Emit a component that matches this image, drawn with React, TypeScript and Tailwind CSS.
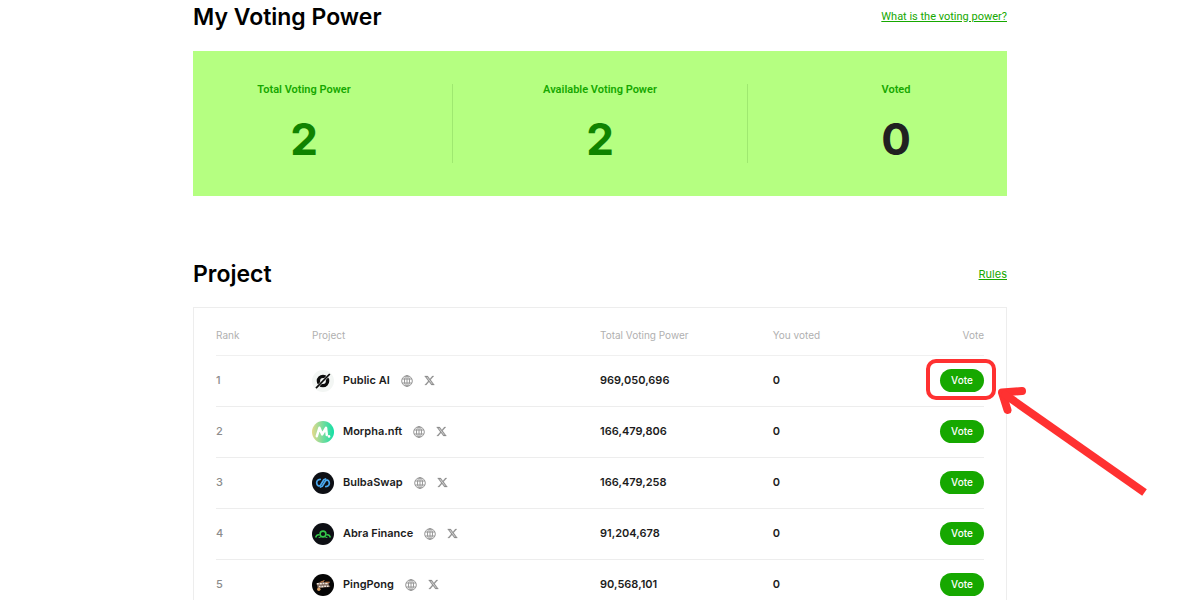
import type { ReactNode } from "react";

type Project = {
  name: string;
  power: string;
  voted: number;
  logo: ReactNode;
  highlighted?: boolean;
};

const PublicAiLogo = () => (
  <svg viewBox="0 0 22 22" className="size-[22px]" aria-hidden="true">
    <circle cx="11" cy="11" r="11" fill="#f3f6f4" />
    <circle cx="11" cy="11" r="4.6" fill="none" stroke="#0c0c0c" strokeWidth="3.4" />
    <path d="M6.5 15.7 15.5 6.3" stroke="#f3f6f4" strokeWidth="2.4" />
    <path d="M4 18.2 17.8 4" stroke="#0c0c0c" strokeWidth="1.7" />
  </svg>
);

const MorphaLogo = () => (
  <svg viewBox="0 0 22 22" className="size-[22px]" aria-hidden="true">
    <defs>
      <linearGradient id="morpha" x1="0" y1="0" x2="1" y2="0">
        <stop offset="0" stopColor="#e6d98a" />
        <stop offset="0.45" stopColor="#7fdc9c" />
        <stop offset="1" stopColor="#12dfa6" />
      </linearGradient>
    </defs>
    <circle cx="11" cy="11" r="11" fill="url(#morpha)" />
    <path
      d="M4.8 15.2 7.4 6.8l2.8 6.6L14 6.8l.8 7.2"
      fill="none"
      stroke="#fff"
      strokeWidth="2.5"
      strokeLinecap="round"
      strokeLinejoin="round"
    />
    <circle cx="17" cy="15.4" r="1.3" fill="#fff" />
  </svg>
);

const BulbaLogo = () => (
  <svg viewBox="0 0 22 22" className="size-[22px]" aria-hidden="true">
    <circle cx="11" cy="11" r="11" fill="#0d0f14" />
    <g fill="none" stroke="#4aa8ee" strokeWidth="1.7" strokeLinecap="round" strokeLinejoin="round">
      <path d="M8.2 7.4C5.6 7.6 4.2 9.6 4.8 11.8 5.4 14 7.4 14.6 8.6 13L11.8 7.8 13.6 7" />
      <path d="M13.8 14.6C16.4 14.4 17.8 12.4 17.2 10.2 16.6 8 14.6 7.4 13.4 9L10.2 14.2 8.4 15" />
    </g>
  </svg>
);

const AbraLogo = () => (
  <svg viewBox="0 0 22 22" className="size-[22px]" aria-hidden="true">
    <circle cx="11" cy="11" r="11" fill="#0d0f14" />
    <g fill="none" stroke="#35c84a">
      <circle cx="11" cy="11" r="2.9" strokeWidth="1.6" />
      <path d="M3.6 14.6c.6-2 2.2-3.2 4-2.8M18.4 14.6c-.6-2-2.2-3.2-4-2.8" strokeWidth="1.6" />
      <path d="M6.6 14.4h2M13.4 14.4h2" strokeWidth="1" />
    </g>
  </svg>
);

const PingPongLogo = () => (
  <svg viewBox="0 0 22 22" className="size-[22px]" aria-hidden="true">
    <circle cx="11" cy="11" r="11" fill="#050505" />
    <path d="M4.6 9.6 12.4 6.2l-.8 2 6.6-.4-1.6 2.4 1.8 2.8-6.4.4-6.2 1.2z" fill="#7b6457" />
    <path
      d="M4.8 9.8h2M7.6 9.8h2.2M10.6 9.4h1.8M13.2 9.4h2.4M6.8 12.4h1.8M9.4 12.4h2M12.2 12.2h1.8M14.8 12.2h1.8"
      stroke="#efe6dd"
      strokeWidth="1.5"
    />
    <path d="M8.4 8.2l4-1.6M13.4 8.2h4" stroke="#c9773a" strokeWidth="0.9" />
    <circle cx="6.8" cy="15.2" r="1.7" fill="#d9a066" />
  </svg>
);

const GlobeIcon = () => (
  <svg viewBox="0 0 12 12" className="size-3" fill="none" stroke="#8c8c8c" strokeWidth="0.9" aria-hidden="true">
    <circle cx="6" cy="6" r="5.3" />
    <ellipse cx="6" cy="6" rx="2.5" ry="5.3" />
    <path d="M6 .8v10.4M1.2 4h9.6M1.2 8h9.6" />
  </svg>
);

const XIcon = () => (
  <svg viewBox="0 0 24 24" className="size-[11px]" fill="#8c8c8c" stroke="#8c8c8c" strokeWidth="0.6" aria-hidden="true">
    <path d="M18.244 2.25h3.308l-7.227 8.26 8.502 11.24H16.17l-5.214-6.817L4.99 21.75H1.68l7.73-8.835L1.254 2.25H8.08l4.713 6.231zm-1.161 17.52h1.833L7.084 4.126H5.117z" />
  </svg>
);

const projects: Project[] = [
  { name: "Public AI", power: "969,050,696", voted: 0, logo: <PublicAiLogo />, highlighted: true },
  { name: "Morpha.nft", power: "166,479,806", voted: 0, logo: <MorphaLogo /> },
  { name: "BulbaSwap", power: "166,479,258", voted: 0, logo: <BulbaLogo /> },
  { name: "Abra Finance", power: "91,204,678", voted: 0, logo: <AbraLogo /> },
  { name: "PingPong", power: "90,568,101", voted: 0, logo: <PingPongLogo /> },
];

// Red frame and arrow drawn over the first vote button
const VoteCallout = () => (
  <>
    <span className="pointer-events-none absolute -top-[10px] -right-[12px] -bottom-[8px] -left-[14px] rounded-[10px] border-4 border-[#ff3131]" />
    <svg
      viewBox="0 0 150 112"
      className="pointer-events-none absolute top-4 left-[58px] h-[112px] w-[150px] max-w-none"
      fill="none"
      stroke="#ff3131"
      strokeWidth="8"
      aria-hidden="true"
    >
      <path d="M24 6 4 7.5 9.5 25" strokeLinecap="round" strokeLinejoin="round" />
      <path d="M4 7.5 146.5 107.5" />
    </svg>
  </>
);

function PowerStat({ label, value, className }: { label: string; value: number; className: string }) {
  return (
    <div className={`flex h-[79px] flex-col items-center ${className}`}>
      <dt className="font-['Roboto',sans-serif] text-[11px] leading-3 font-semibold text-[#16a800]">{label}</dt>
      <dd
        className={`mt-[19px] text-[44px] leading-[48px] font-bold ${value > 0 ? "text-[#108300]" : "text-[#212121]"}`}
      >
        {value}
      </dd>
    </div>
  );
}

export default function App() {
  return (
    <main className="min-h-screen overflow-hidden bg-white font-['Inter',sans-serif]">
      <div className="mx-auto max-w-[814px]">
        {/* Voting power */}
        <section>
          <div className="flex h-[51px] items-start justify-between pt-[5px]">
            <h2 className="text-[23px] leading-6 font-semibold text-black">My Voting Power</h2>
            <a
              href="#power"
              className="font-['Roboto',sans-serif] text-[11px] leading-6 text-[#16a800] underline"
            >
              What is the voting power?
            </a>
          </div>
          <dl className="flex bg-[#b5ff81] py-[33px]">
            <PowerStat label="Total Voting Power" value={2} className="flex-1 pr-[37px]" />
            <PowerStat
              label="Available Voting Power"
              value={2}
              className="w-[296px] border-x border-[#9fe870]"
            />
            <PowerStat label="Voted" value={0} className="flex-1 pl-[37px]" />
          </dl>
        </section>

        {/* Project ranking */}
        <section className="mt-[66px]">
          <div className="flex items-center justify-between">
            <h2 className="text-[23px] leading-6 font-semibold text-black">Project</h2>
            <a href="#rules" className="text-[11px] leading-6 text-[#16a800] underline">
              Rules
            </a>
          </div>
          <div className="mt-[21px] border border-[#ededed] px-[22px] pt-2">
            <table className="w-full table-fixed text-left">
              <thead>
                <tr className="h-[39px] border-b border-[#f0f0f0] text-[10px] text-[#b0b0b0]">
                  <th className="w-[12.5%] font-normal">Rank</th>
                  <th className="w-[37.5%] font-normal">Project</th>
                  <th className="w-[22.5%] font-normal">Total Voting Power</th>
                  <th className="font-normal">You voted</th>
                  <th className="w-[10%] text-right font-normal">Vote</th>
                </tr>
              </thead>
              <tbody>
                {projects.map((project, index) => (
                  <tr key={project.name} className="h-[51px] border-b border-[#ededed] text-[11px] text-[#1c1c1c]">
                    <td className="font-medium text-[#8c8c8c]">{index + 1}</td>
                    <td>
                      <div className="flex items-center">
                        {project.logo}
                        <span className="ml-[9px] font-semibold">{project.name}</span>
                        <a href="#site" aria-label={`${project.name} website`} className="ml-[11px]">
                          <GlobeIcon />
                        </a>
                        <a href="#x" aria-label={`${project.name} on X`} className="ml-[11px]">
                          <XIcon />
                        </a>
                      </div>
                    </td>
                    <td className="font-semibold">{project.power}</td>
                    <td className="font-semibold">{project.voted}</td>
                    <td>
                      <div className="relative ml-auto w-11">
                        <button
                          type="button"
                          className="block h-[23px] w-full rounded-full bg-[#16a800] text-[10px] font-medium text-white"
                        >
                          Vote
                        </button>
                        {project.highlighted && <VoteCallout />}
                      </div>
                    </td>
                  </tr>
                ))}
              </tbody>
            </table>
          </div>
        </section>
      </div>
    </main>
  );
}
